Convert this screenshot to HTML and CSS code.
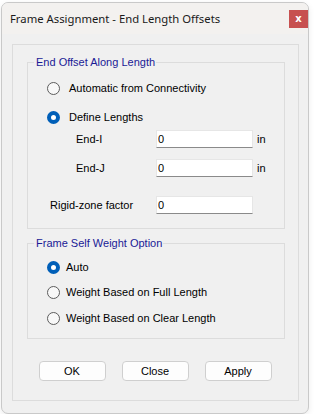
FILE: index.html
```html
<!DOCTYPE html>
<html lang="en">
<head>
    <meta charset="UTF-8">
    <meta name="viewport" content="width=device-width, initial-scale=1.0">
    <title>Frame Assignment - End Length Offsets</title>
    <link rel="stylesheet" href="styles.css">
</head>
<body>
    <div class="window">
        <!-- Barra de titulo -->
        <div class="titlebar">
            <span class="title">Frame Assignment - End Length Offsets</span>
            <button class="close-btn">x</button>
        </div>

        <div class="content">
            <div class="panel">
                <!-- Grupo 1 -->
                <div class="group group-offset">
                    <div class="group-title">End Offset Along Length</div>
                    <label class="radio-row row-auto">
                        <input type="radio" name="offset">
                        <span>Automatic from Connectivity</span>
                    </label>
                    <label class="radio-row row-define">
                        <input type="radio" name="offset" checked>
                        <span>Define Lengths</span>
                    </label>
                    <div class="field-row row-endi">
                        <span class="field-label">End-I</span>
                        <input type="text" class="textbox" value="0">
                        <span class="unit">in</span>
                    </div>
                    <div class="field-row row-endj">
                        <span class="field-label">End-J</span>
                        <input type="text" class="textbox" value="0">
                        <span class="unit">in</span>
                    </div>
                    <div class="field-row row-rigid">
                        <span class="field-label wide">Rigid-zone factor</span>
                        <input type="text" class="textbox" value="0">
                    </div>
                </div>

                <!-- Grupo 2 -->
                <div class="group group-weight">
                    <div class="group-title">Frame Self Weight Option</div>
                    <label class="radio-row tight row-w1">
                        <input type="radio" name="weight" checked>
                        <span>Auto</span>
                    </label>
                    <label class="radio-row tight row-w2">
                        <input type="radio" name="weight">
                        <span>Weight Based on Full Length</span>
                    </label>
                    <label class="radio-row tight row-w3">
                        <input type="radio" name="weight">
                        <span>Weight Based on Clear Length</span>
                    </label>
                </div>

                <div class="buttons">
                    <button class="btn">OK</button>
                    <button class="btn">Close</button>
                    <button class="btn">Apply</button>
                </div>
            </div>
        </div>
    </div>
</body>
</html>
```

FILE: styles.css
```css
body {
    margin: 0;
    padding: 2px 0 0 1px;
    background-color: #ffffff;
    font-family: 'Liberation Sans', Arial, sans-serif;
    font-size: 11px;
    color: #000000;
}

.window {
    width: 306px;
    height: 410px;
    border: 1px solid #c9c9c9;
    border-radius: 7px;
    background-color: #f0f0f0;
    box-shadow: 0 2px 6px rgba(0, 0, 0, 0.08);
    overflow: hidden;
}

.titlebar {
    display: flex;
    justify-content: space-between;
    align-items: center;
    height: 31px;
    background-color: #f3f1ef;
}

.title {
    margin-left: 8px;
    font-family: 'Noto Sans', 'Open Sans', sans-serif;
    font-size: 11.3px;
    color: #1a1a1a;
}

.close-btn {
    width: 19px;
    height: 18px;
    padding: 0;
    border: none;
    background-color: #c75050;
    color: #ffffff;
    font-family: 'DejaVu Sans', sans-serif;
    font-size: 10px;
    font-weight: bold;
    line-height: 16px;
}

.content {
    padding: 10px 9px 12px 10px;
}

.panel {
    height: 355px;
    border: 1px solid #dcdcdc;
}

.group {
    margin: 0 13px 0 14px;
    border: 1px solid #dcdcdc;
}

.group-offset {
    margin-top: 17px;
    padding-bottom: 14px;
}

.group-weight {
    margin-top: 14px;
    padding-bottom: 10px;
}

.group-title {
    width: fit-content;
    height: 13px;
    margin: -7px 0 0 6px;
    padding: 0 1px 0 2px;
    line-height: 13px;
    color: #1a1a96;
    background-color: #f0f0f0;
}

.radio-row {
    display: flex;
    align-items: center;
    height: 20px;
    padding-left: 19px;
}

.radio-row input {
    -webkit-appearance: none;
    appearance: none;
    width: 13px;
    height: 13px;
    margin: 0 9px 0 0;
    border: 1px solid #5c5c5c;
    border-radius: 50%;
    background-color: #f8f8f8;
}

.radio-row input:checked {
    border: 4px solid #005fb8;
    background-color: #ffffff;
}

.radio-row.tight input {
    margin-right: 6px;
}

.row-auto { margin-top: 9px; }
.row-define { margin-top: 9px; }
.row-w1 { margin-top: 7px; }
.row-w2 { margin-top: 5px; }
.row-w3 { margin-top: 6px; }

.field-row {
    display: flex;
    align-items: center;
    height: 18px;
    padding-left: 48px;
}

.row-endi { margin-top: 3px; }
.row-endj { margin-top: 11px; }
.row-rigid { margin-top: 19px; padding-left: 22px; }

.field-label {
    width: 80px;
}

.field-label.wide {
    width: 106px;
}

.textbox {
    box-sizing: border-box;
    width: 97px;
    height: 18px;
    padding: 0 0 0 1px;
    border: 1px solid #e6e6e6;
    border-bottom-color: #8a8a8a;
    background-color: #ffffff;
    font-family: 'Liberation Sans', Arial, sans-serif;
    font-size: 11px;
    color: #000000;
}

.unit {
    margin-left: 4px;
}

.buttons {
    display: flex;
    justify-content: center;
    gap: 16px;
    margin-top: 22px;
    padding-right: 1px;
}

.btn {
    width: 67px;
    height: 20px;
    padding: 0;
    border: 1px solid #cfcfcf;
    border-radius: 4px;
    background-color: #fdfdfd;
    font-family: 'Liberation Sans', Arial, sans-serif;
    font-size: 11px;
    color: #000000;
}
```
